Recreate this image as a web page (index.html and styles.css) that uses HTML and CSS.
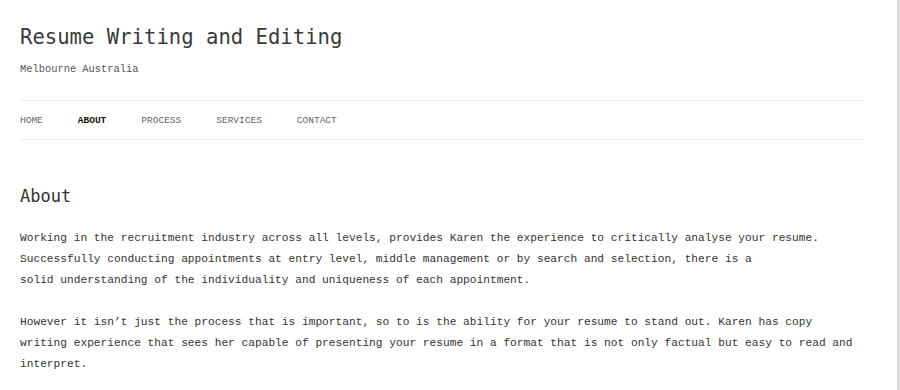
FILE: index.html
```html
<!DOCTYPE html>
<html lang="en">
<head>
<meta charset="utf-8">
<title>Resume Writing and Editing</title>
<link rel="stylesheet" href="styles.css">
</head>
<body>
<div class="page">
  <div class="container">
    <header class="site-header">
      <h1 class="site-title">Resume Writing and Editing</h1>
      <p class="site-desc">Melbourne Australia</p>
    </header>
    <nav class="main-nav">
      <a href="#" class="nav-item">HOME</a>
      <a href="#" class="nav-item current">ABOUT</a>
      <a href="#" class="nav-item">PROCESS</a>
      <a href="#" class="nav-item">SERVICES</a>
      <a href="#" class="nav-item">CONTACT</a>
    </nav>
    <main class="content">
      <h2 class="page-title">About</h2>
      <p class="para">Working in the recruitment industry across all levels, provides Karen the experience to critically analyse your resume.<br>Successfully conducting appointments at entry level, middle management or by search and selection, there is a<br>solid understanding of the individuality and uniqueness of each appointment.</p>
      <p class="para">However it isn’t just the process that is important, so to is the ability for your resume to stand out. Karen has copy writing experience that sees her capable of presenting your resume in a format that is not only factual but easy to read and interpret.</p>
    </main>
  </div>
</div>
</body>
</html>
```

FILE: styles.css
```css
html, body {
  margin: 0;
  padding: 0;
  background: #fff;
}
body {
  font-family: "Liberation Mono", "DejaVu Sans Mono", monospace;
  color: #333;
  overflow: hidden;
}
.page {
  width: 897px;
  height: 390px;
  border-right: 3px solid #d9d9d9;
  overflow: hidden;
}
.container {
  width: 842px;
  padding-left: 20px;
}
.site-header {
  padding-top: 24px;
}
.site-title {
  margin: 0;
  font-family: "DejaVu Sans Mono", "Liberation Mono", monospace;
  font-size: 20.6px;
  font-weight: normal;
  line-height: 26px;
  color: #3a3a3a;
}
.site-desc {
  margin: 12px 0 0;
  font-size: 10.4px;
  line-height: 14px;
  color: #555;
}
.main-nav {
  margin-top: 24px;
  border-top: 1px solid #ececec;
  border-bottom: 1px solid #ececec;
  height: 38px;
  display: flex;
  align-items: center;
  gap: 35px;
}
.nav-item {
  font-size: 9.5px;
  color: #666;
  text-decoration: none;
  line-height: 14px;
  padding-top: 1px;
}
.nav-item.current {
  color: #111;
  font-weight: bold;
}
.content {
  padding-top: 44px;
}
.page-title {
  margin: 0;
  font-family: "DejaVu Sans Mono", "Liberation Mono", monospace;
  font-size: 17px;
  font-weight: normal;
  line-height: 24px;
  color: #333;
}
.para {
  margin: 20px 0 0;
  font-size: 11.2px;
  line-height: 21px;
  color: #333;
}
.para + .para {
  margin-top: 21px;
}
```
